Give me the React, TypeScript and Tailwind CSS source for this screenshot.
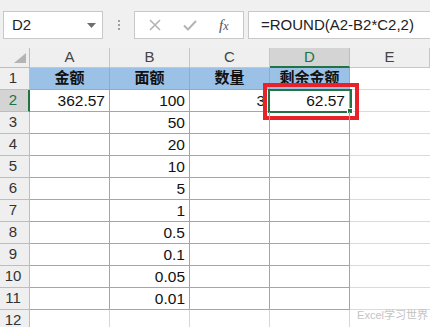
import React from "react";

const cols = ["A", "B", "C", "D", "E"];

const rows: string[][] = [
  ["金额", "面额", "数量", "剩余金额"],
  ["362.57", "100", "3", "62.57"],
  ["", "50", "", ""],
  ["", "20", "", ""],
  ["", "10", "", ""],
  ["", "5", "", ""],
  ["", "1", "", ""],
  ["", "0.5", "", ""],
  ["", "0.1", "", ""],
  ["", "0.05", "", ""],
  ["", "0.01", "", ""],
  ["", "", "", ""],
];

function NameBox() {
  return (
    <div className="ml-[3px] flex h-[28px] w-[100px] items-center justify-between border border-[#c8c8c8] bg-white pl-[8px] pr-[6px]">
      <span className="text-[15px] text-[#222]">D2</span>
      <svg width="9" height="5" viewBox="0 0 9 5">
        <polygon points="0,0 9,0 4.5,5" fill="#6e6e6e" />
      </svg>
    </div>
  );
}

function FuncBox() {
  return (
    <div className="flex h-[28px] w-[110px] items-center border border-[#c8c8c8] bg-white">
      <svg width="12" height="12" viewBox="0 0 12 12" className="ml-[14px]">
        <path d="M1 1 L11 11 M11 1 L1 11" stroke="#b4b4b4" strokeWidth="1.6" />
      </svg>
      <svg width="14" height="11" viewBox="0 0 14 11" className="ml-[22px]">
        <path d="M1 5.5 L5 9.5 L13 1" stroke="#b4b4b4" strokeWidth="2" fill="none" />
      </svg>
      <span className="ml-[22px] font-['Liberation_Serif',serif] text-[15px] italic text-[#555]">
        f<span className="text-[12px]">x</span>
      </span>
    </div>
  );
}

export default function App() {
  return (
    <div className="relative h-[327px] w-[430px] overflow-hidden bg-white font-['Liberation_Sans','Noto_Sans_CJK_SC',sans-serif]">
      {/* formula bar */}
      <div className="flex h-[48px] items-start bg-[#f0f0f0] pt-[11px]">
        <NameBox />
        <div className="flex h-[28px] w-[31px] flex-col items-center justify-center gap-[2px]">
          <span className="h-[2px] w-[2px] bg-[#a0a0a0]" />
          <span className="h-[2px] w-[2px] bg-[#a0a0a0]" />
          <span className="h-[2px] w-[2px] bg-[#a0a0a0]" />
        </div>
        <FuncBox />
        <div className="ml-[4px] flex h-[28px] flex-1 items-center border border-r-0 border-[#c8c8c8] bg-white pl-[12px] text-[15px] text-[#222]">
          =ROUND(A2-B2*C2,2)
        </div>
      </div>

      {/* sheet */}
      <div className="grid grid-cols-[30px_80px_80px_80px_80px_80px] grid-rows-[20px_repeat(12,22px)]">
        <div className="flex items-end justify-end border-r border-b border-[#bdbdbd] bg-[#efefef] pr-[3px] pb-[4px]">
          <svg width="12" height="10" viewBox="0 0 12 10">
            <polygon points="0,10 12,10 12,0" fill="#b4b4b4" />
          </svg>
        </div>
        {cols.map((c) => (
          <div
            key={c}
            className={
              c === "D"
                ? "flex items-center justify-center border-r border-b-2 border-r-[#bdbdbd] border-b-[#217346] bg-[#d4d4d4] text-[15px] text-[#217346]"
                : "flex items-center justify-center border-r border-b border-[#c6c6c6] bg-[#efefef] text-[15px] text-[#444]"
            }
          >
            {c}
          </div>
        ))}

        {rows.map((r, i) => {
          const n = i + 1;
          const boxed = n <= 11;
          return (
            <React.Fragment key={n}>
              <div
                className={
                  n === 2
                    ? "flex items-center justify-center border-r-2 border-b border-r-[#217346] border-b-[#bdbdbd] bg-[#d4d4d4] pr-[2px] text-[15px] text-[#217346]"
                    : "flex items-center justify-center border-r border-b border-[#bdbdbd] bg-[#efefef] pr-[3px] text-[15px] text-[#333]"
                }
              >
                {n}
              </div>
              {r.map((v, j) => (
                <div
                  key={j}
                  className={`relative flex items-center border-r border-b text-[15.5px] text-[#111] ${
                    boxed ? "border-[#a6a6a6]" : "border-[#d6d6d6]"
                  } ${
                    n === 1
                      ? "justify-center bg-[#9bc2e6] text-[15px] font-bold"
                      : "justify-end pr-[4px]"
                  }`}
                >
                  {v}
                  {n === 2 && j === 3 && (
                    <>
                      <div className="absolute left-[-2px] top-[-1px] h-[24px] w-[84px] border-2 border-[#217346]">
                        <div className="absolute right-[-3px] bottom-[-3px] h-[6px] w-[6px] border border-white bg-[#217346]" />
                      </div>
                      <div className="absolute left-[-7px] top-[-7px] h-[37px] w-[96px] border-4 border-[#e8222b]" />
                    </>
                  )}
                </div>
              ))}
              <div className="border-b border-[#dadada]" />
            </React.Fragment>
          );
        })}
      </div>

      <div className="absolute right-[2px] bottom-[6px] text-[11px] leading-none text-[#c4c4c4]">
        Excel学习世界
      </div>
    </div>
  );
}
